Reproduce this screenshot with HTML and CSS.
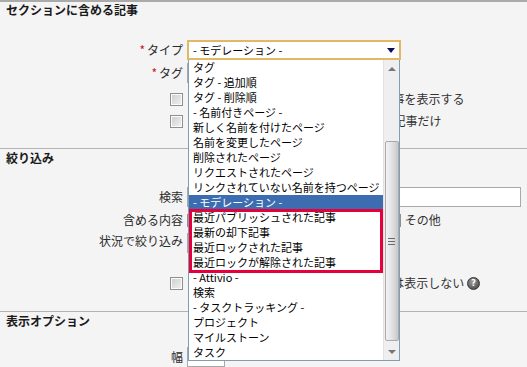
FILE: index.html
```html
<!DOCTYPE html>
<html lang="ja">
<head>
<meta charset="utf-8">
<link rel="stylesheet" href="styles.css">
</head>
<body>
<section class="sec sec-a">
  <h2>セクションに含める記事</h2>
  <div class="rows rows-a">
    <div class="row">
      <div class="lbl"><span class="req">*</span>タイプ</div>
      <div class="field">
        <div class="select-wrap">
          <div class="select"><span>- モデレーション -</span><span class="arrow"></span></div>
          <div class="dropdown">
            <div class="opts">
              <div class="opt">タグ</div>
              <div class="opt">タグ - 追加順</div>
              <div class="opt">タグ - 削除順</div>
              <div class="opt">- 名前付きページ -</div>
              <div class="opt">新しく名前を付けたページ</div>
              <div class="opt">名前を変更したページ</div>
              <div class="opt">削除されたページ</div>
              <div class="opt">リクエストされたページ</div>
              <div class="opt">リンクされていない名前を持つページ</div>
              <div class="opt sel">- モデレーション -</div>
              <div class="opt">最近パブリッシュされた記事</div>
              <div class="opt">最新の却下記事</div>
              <div class="opt">最近ロックされた記事</div>
              <div class="opt">最近ロックが解除された記事</div>
              <div class="opt">- Attivio -</div>
              <div class="opt">検索</div>
              <div class="opt">- タスクトラッキング -</div>
              <div class="opt">プロジェクト</div>
              <div class="opt">マイルストーン</div>
              <div class="opt">タスク</div>
            </div>
            <div class="sbar">
              <div class="sb-btn"><span class="tri-up"></span></div>
              <div class="thumb"></div>
              <div class="sb-btn sb-down"><span class="tri-down"></span></div>
            </div>
            <div class="mark"></div>
          </div>
        </div>
      </div>
    </div>
    <div class="row">
      <div class="lbl"><span class="req">*</span>タグ</div>
      <div class="field"><div class="input tag-input"></div></div>
    </div>
    <div class="row">
      <div class="lbl"><span class="cb"></span></div>
      <div class="field shifted">下位にあるすべてのサブページ内の記事を表示する</div>
    </div>
    <div class="row">
      <div class="lbl"><span class="cb"></span></div>
      <div class="field shifted">ログインしているユーザーが作成した記事だけ</div>
    </div>
  </div>
</section>

<section class="sec sec-b">
  <h2>絞り込み</h2>
  <div class="rows rows-b">
    <div class="row">
      <div class="lbl">検索</div>
      <div class="field"><div class="input search-input"></div></div>
    </div>
    <div class="row">
      <div class="lbl">含める内容</div>
      <div class="field checks">
        <span class="chk"><span class="cb"></span>記事</span>
        <span class="chk"><span class="cb"></span>ページ</span>
        <span class="chk"><span class="cb"></span>コメント</span>
        <span class="chk"><span class="cb"></span>その他</span>
      </div>
    </div>
    <div class="row row-top">
      <div class="lbl">状況で絞り込み</div>
      <div class="field"><div class="input status-input"></div></div>
    </div>
    <div class="row">
      <div class="lbl"><span class="cb"></span></div>
      <div class="field help-line">アクセス権限のない記事や下位ページは表示しない<span class="help">?</span></div>
    </div>
  </div>
</section>

<section class="sec sec-c">
  <h2>表示オプション</h2>
  <div class="rows rows-c">
    <div class="row">
      <div class="lbl">幅</div>
      <div class="field"><div class="input width-input"></div></div>
    </div>
  </div>
</section>
</body>
</html>
```

FILE: styles.css
```css
* {
  box-sizing: border-box;
}

html, body {
  height: 367px;
  overflow: hidden;
}

body {
  margin: 0;
  background: #f4f4f4;
  border-top: 2px solid #aaaaaa;
  font-family: "Noto Sans CJK JP", "Noto Sans", sans-serif;
  font-size: 12px;
  color: #333;
}

.sec {
  border-bottom: 1px solid #b3b3b3;
}

.sec h2 {
  margin: 0;
  padding-left: 6px;
  font-size: 12px;
  font-weight: bold;
  line-height: 16px;
  color: #1a1a1a;
}

.sec-b h2,
.sec-c h2 {
  margin-top: 1px;
}

.rows {
  display: grid;
}

.rows-a {
  margin-top: 22px;
  padding-bottom: 18px;
  grid-template-rows: 20px 26px 26px 18px;
}

.rows-b {
  margin-top: 21px;
  padding-bottom: 18px;
  grid-template-rows: 20px 26px 40px 20px;
}

.rows-c {
  margin-top: 18px;
  grid-template-rows: 20px;
}

.sec-c {
  border-bottom: none;
}

.row {
  display: grid;
  grid-template-columns: 183px 1fr;
  column-gap: 4px;
  align-items: center;
  line-height: 16px;
}

.row-top {
  align-items: start;
}

.lbl {
  display: flex;
  justify-content: flex-end;
  align-items: center;
  white-space: nowrap;
  color: #2b2b2b;
}

.req {
  color: #c41a1a;
  margin-right: 2px;
  font-size: 12px;
}

.field {
  display: flex;
  align-items: center;
  white-space: nowrap;
  min-width: 0;
}

.shifted {
  padding-left: 3px;
}

.cb {
  display: inline-block;
  width: 13px;
  height: 13px;
  border: 1px solid #8f8f8f;
  background: linear-gradient(135deg, #cdcdcd, #f2f2f2);
  box-shadow: inset 0 0 0 1px #fbfbfb;
  flex: none;
}

.checks {
  gap: 14px;
}

.chk {
  display: inline-flex;
  align-items: center;
  gap: 4px;
}

.input {
  height: 20px;
  background: #fff;
  border: 1px solid #a9a9a9;
}

.tag-input {
  width: 200px;
}

.search-input {
  width: 334px;
}

.status-input {
  width: 150px;
}

.width-input {
  width: 38px;
}

.help-line {
  gap: 3px;
  padding-left: 2px;
}

.help {
  display: inline-block;
  width: 13px;
  height: 13px;
  border-radius: 50%;
  background: radial-gradient(circle at 40% 35%, #9c9c9c, #3c3c3c);
  border: 1px solid #333;
  color: #fff;
  font-family: "DejaVu Sans", sans-serif;
  font-size: 8px;
  font-weight: bold;
  line-height: 11px;
  text-align: center;
}

/* select + open dropdown */
.select-wrap {
  position: relative;
  width: 214px;
  height: 20px;
}

.select {
  height: 20px;
  border: 2px solid #e2b866;
  background: #fff;
  display: flex;
  justify-content: space-between;
  align-items: center;
  padding: 0 4px 0 4px;
  font-size: 11px;
  line-height: 15px;
  color: #000;
}

.arrow {
  width: 0;
  height: 0;
  border-left: 4px solid transparent;
  border-right: 4px solid transparent;
  border-top: 5px solid #0b0b5c;
}

.dropdown {
  position: absolute;
  left: 1px;
  top: 20px;
  width: 212px;
  height: 301px;
  border: 1px solid #7f9db9;
  border-top: none;
  background: #fff;
  display: flex;
  z-index: 10;
}

.opts {
  flex: 1;
  overflow: hidden;
}

.opt {
  height: 15px;
  line-height: 15px;
  padding-left: 4px;
  font-size: 11px;
  color: #000;
  white-space: nowrap;
}

.opt.sel {
  background: #3d6db1;
  color: #fff;
}

.sbar {
  width: 16px;
  flex: none;
  background: #efefef;
  border-left: 1px solid #e2e2e2;
  display: flex;
  flex-direction: column;
  align-items: center;
}

.sb-btn {
  height: 17px;
  width: 100%;
  display: flex;
  align-items: center;
  justify-content: center;
}

.sb-down {
  margin-top: auto;
}

.tri-up {
  width: 0;
  height: 0;
  border-left: 4px solid transparent;
  border-right: 4px solid transparent;
  border-bottom: 4px solid #777;
}

.tri-down {
  width: 0;
  height: 0;
  border-left: 4px solid transparent;
  border-right: 4px solid transparent;
  border-top: 4px solid #777;
}

.thumb {
  margin-top: 64px;
  width: 14px;
  height: 200px;
  border: 1px solid #a9a9a9;
  border-radius: 2px;
  background: linear-gradient(to right, #f3f3f3, #e0e0e0 55%, #c8c8c8);
  display: flex;
  align-items: center;
  justify-content: center;
}

.thumb::after {
  content: "";
  width: 7px;
  height: 7px;
  background: repeating-linear-gradient(to bottom, #6a6a6a 0 1px, transparent 1px 3px);
}

.mark {
  position: absolute;
  left: 0;
  top: 149px;
  width: 194px;
  height: 64px;
  border: 3px solid #e5003b;
  pointer-events: none;
}
```
